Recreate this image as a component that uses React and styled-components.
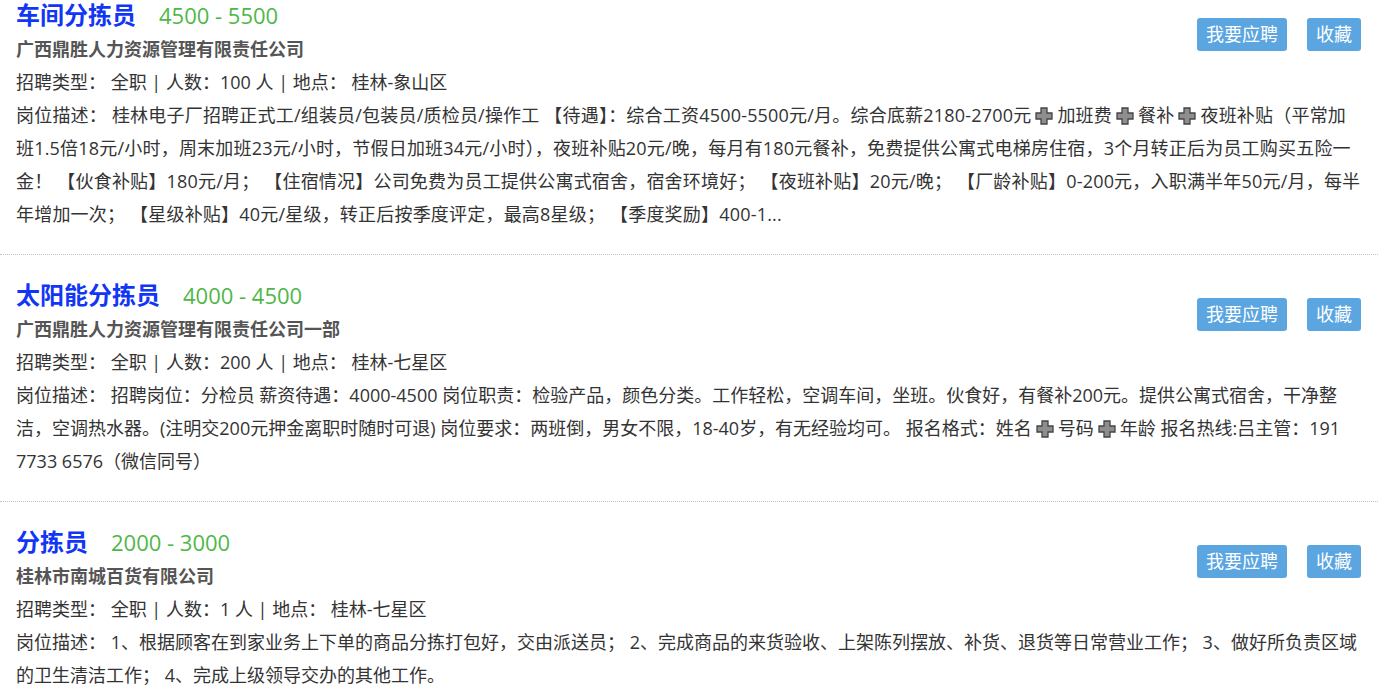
import React from "react";
import styled, { createGlobalStyle } from "styled-components";

const jobs = [
  {
    title: "车间分拣员",
    salary: "4500 - 5500",
    company: "广西鼎胜人力资源管理有限责任公司",
    count: "100",
    place: "桂林-象山区",
    spacing: 0.2,
    desc:
      "桂林电子厂招聘正式工/组装员/包装员/质检员/操作工 【待遇】：综合工资4500-5500元/月。综合底薪2180-2700元+加班费+餐补+夜班补贴（平常加班1.5倍18元/小时，周末加班23元/小时，节假日加班34元/小时），夜班补贴20元/晚，每月有180元餐补，免费提供公寓式电梯房住宿，3个月转正后为员工购买五险一金！ 【伙食补贴】180元/月； 【住宿情况】公司免费为员工提供公寓式宿舍，宿舍环境好； 【夜班补贴】20元/晚； 【厂龄补贴】0-200元，入职满半年50元/月，每半年增加一次； 【星级补贴】40元/星级，转正后按季度评定，最高8星级； 【季度奖励】400-1...",
  },
  {
    title: "太阳能分拣员",
    salary: "4000 - 4500",
    company: "广西鼎胜人力资源管理有限责任公司一部",
    count: "200",
    place: "桂林-七星区",
    spacing: 0,
    desc:
      "招聘岗位：分检员 薪资待遇：4000-4500 岗位职责：检验产品，颜色分类。工作轻松，空调车间，坐班。伙食好，有餐补200元。提供公寓式宿舍，干净整洁，空调热水器。(注明交200元押金离职时随时可退) 岗位要求：两班倒，男女不限，18-40岁，有无经验均可。 报名格式：姓名+号码+年龄 报名热线:吕主管：191 7733 6576（微信同号）",
  },
  {
    title: "分拣员",
    salary: "2000 - 3000",
    company: "桂林市南城百货有限公司",
    count: "1",
    place: "桂林-七星区",
    spacing: 0,
    desc:
      "1、根据顾客在到家业务上下单的商品分拣打包好，交由派送员； 2、完成商品的来货验收、上架陈列摆放、补货、退货等日常营业工作； 3、做好所负责区域的卫生清洁工作； 4、完成上级领导交办的其他工作。",
  },
];

// ➕ 表情画成小图标
const PlusIcon = () => (
  <PlusSvg viewBox="0 0 18 18">
    <path
      d="M6 1h6v5h5v6h-5v5h-6v-5h-5v-6h5z"
      fill="#8e8e8e"
      stroke="#444"
      strokeWidth="1.3"
    />
  </PlusSvg>
);

const renderDesc = (text) => {
  const parts = text.split("+");
  return parts.map((p, i) => (
    <React.Fragment key={i}>
      {p}
      {i < parts.length - 1 && <PlusIcon />}
    </React.Fragment>
  ));
};

const App = () => {
  return (
    <>
      <GlobalStyle />
      <List>
        {jobs.map((job, idx) => (
          <Card key={`job${idx}`} $first={idx === 0}>
            <Actions>
              <Btn>我要应聘</Btn>
              <Btn>收藏</Btn>
            </Actions>
            <TitleRow>
              <Title>{job.title}</Title>
              <Salary>{job.salary}</Salary>
            </TitleRow>
            <Company>{job.company}</Company>
            <Line>
              招聘类型：&nbsp;全职 | 人数：{job.count} 人 | 地点：&nbsp;{job.place}
            </Line>
            <Line $spacing={job.spacing}>岗位描述：&nbsp;{renderDesc(job.desc)}</Line>
          </Card>
        ))}
      </List>
    </>
  );
};

const GlobalStyle = createGlobalStyle`
  body {
    margin: 0;
    background: #fff;
    font-family: "Open Sans", "Noto Sans CJK SC", sans-serif;
    color: #333;
  }
`;

const List = styled.div`
  width: 1378px;
`;

const Card = styled.div`
  padding: ${(props) => (props.$first ? "0" : "25px")} 17px 23px 16px;
  border-bottom: 1px dotted #c4c4c4;
  &:last-child {
    border-bottom: none;
  }
  &::after {
    content: "";
    display: block;
    clear: both;
  }
`;

const Actions = styled.div`
  float: right;
  display: flex;
  gap: 20px;
  margin-top: 18px;
  margin-left: 20px;
`;

const Btn = styled.button`
  height: 33px;
  padding: 0 9px;
  border: none;
  border-radius: 3px;
  background-color: #5ba5e1;
  color: #fff;
  font-family: inherit;
  font-size: 18px;
  line-height: 33px;
  cursor: pointer;
`;

const TitleRow = styled.div`
  display: flex;
  align-items: baseline;
  gap: 23px;
  height: 30px;
  line-height: 30px;
`;

const Title = styled.span`
  font-size: 24px;
  font-weight: bold;
  color: #1236f5;
`;

const Salary = styled.span`
  font-size: 22px;
  color: #4fb748;
`;

const Company = styled.div`
  margin-top: 3px;
  font-size: 18px;
  font-weight: bold;
  color: #555;
  line-height: 33px;
`;

const Line = styled.div`
  font-size: 18px;
  line-height: 33px;
  color: #333;
  letter-spacing: ${(props) => props.$spacing || 0}px;
`;

const PlusSvg = styled.svg`
  width: 18px;
  height: 18px;
  vertical-align: -3px;
  margin: 0 4px;
`;

export default App;
